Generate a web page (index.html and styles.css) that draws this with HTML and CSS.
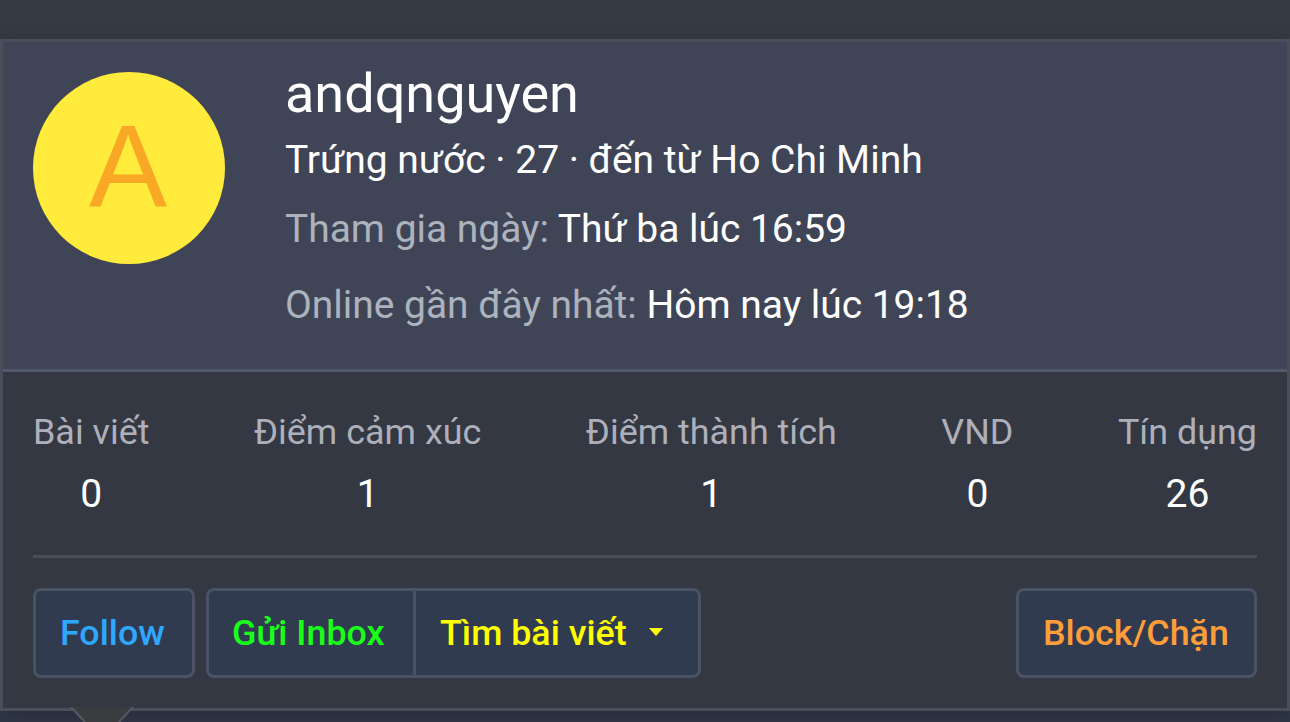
FILE: index.html
```
<!DOCTYPE html>
<html lang="vi">

<head>
    <meta charset="UTF-8">
    <meta name="viewport" content="width=device-width, initial-scale=1.0">
    <link rel="stylesheet" href="styles.css">
    <title>andqnguyen</title>
</head>

<body>
    <div class="tooltip">
        <div class="header">
            <div class="avatar">A</div>
            <div class="info">
                <h4 class="name">andqnguyen</h4>
                <p class="blurb">Trứng nước · 27 · đến từ Ho Chi Minh</p>
                <p class="row"><span class="label">Tham gia ngày:</span> <span>Thứ ba lúc 16:59</span></p>
                <p class="row"><span class="label">Online gần đây nhất:</span> <span>Hôm nay lúc 19:18</span></p>
            </div>
        </div>
        <div class="content">
            <div class="stats">
                <dl>
                    <dt>Bài viết</dt>
                    <dd>0</dd>
                </dl>
                <dl>
                    <dt>Điểm cảm xúc</dt>
                    <dd>1</dd>
                </dl>
                <dl>
                    <dt>Điểm thành tích</dt>
                    <dd>1</dd>
                </dl>
                <dl>
                    <dt>VND</dt>
                    <dd>0</dd>
                </dl>
                <dl>
                    <dt>Tín dụng</dt>
                    <dd>26</dd>
                </dl>
            </div>
            <div class="actions">
                <button class="btn follow">Follow</button>
                <div class="group">
                    <button class="btn inbox">Gửi Inbox</button>
                    <button class="btn find">Tìm bài viết
                        <svg class="caret" width="14" height="8" viewBox="0 0 14 8"><path d="M0 0h14L7 8z" fill="currentColor"/></svg>
                    </button>
                </div>
                <button class="btn block">Block/Chặn</button>
            </div>
        </div>
        <svg class="arrow" width="64" height="15" viewBox="0 0 64 15">
            <path d="M1 0h62L49 15H15z" fill="#3a3c40"/>
            <path d="M1 0l14 15M63 0L49 15" fill="none" stroke="#555962" stroke-width="2"/>
        </svg>
    </div>
</body>

</html>
```
FILE: styles.css
```
* {
    box-sizing: border-box;
}

body {
    margin: 0;
    height: 722px;
    padding-top: 39px;
    overflow: hidden;
    background: linear-gradient(#363a44 0, #363a44 600px, #303747 600px);
    color: #fff;
    font-family: Roboto, sans-serif;
}

h4, p, dl, dd {
    margin: 0;
    font-weight: 400;
}

.tooltip {
    position: relative;
    height: 672px;
    border: 3px solid #4a4e5a;
    background-color: #343842;
    box-shadow: 0 5px 20px rgba(0, 0, 0, 0.2);
}

.header {
    display: flex;
    height: 330px;
    padding: 30px;
    background-color: #3f4556;
    border-bottom: 3px solid #515a6c;
}

.avatar {
    width: 192px;
    height: 192px;
    padding-right: 2px;
    border-radius: 50%;
    background-color: #ffeb3b;
    color: #f9a825;
    font-family: "Liberation Sans", Arial, sans-serif;
    font-size: 117px;
    line-height: 189px;
    text-align: center;
}

.info {
    margin-left: 60px;
    white-space: nowrap;
}

.name {
    font-size: 54px;
    line-height: 44px;
}

.blurb {
    margin: 16px 0 3px;
    font-size: 39px;
    line-height: 56px;
}

.row {
    font-size: 38.95px;
    line-height: 76px;
}

.label {
    color: #adb3bd;
}

.content {
    padding: 30px;
}

.stats {
    display: flex;
    justify-content: space-between;
    height: 156px;
    border-bottom: 3px solid #4b4e58;
    text-align: center;
}

dt {
    color: #adb0ba;
    font-size: 35.9px;
    line-height: 60px;
}

dd {
    font-size: 39px;
    line-height: 65px;
}

.actions {
    display: flex;
    margin-top: 30px;
}

.btn {
    height: 90px;
    padding: 0 0 0 24px;
    border: 3px solid #4a5265;
    border-radius: 8px;
    background-color: #313b4f;
    font-family: inherit;
    font-size: 35.8px;
    font-weight: 500;
    text-align: left;
    white-space: nowrap;
}

.follow {
    width: 162px;
    color: #2ea8ff;
}

.group {
    display: flex;
    margin-left: 11px;
}

.inbox {
    width: 210px;
    padding-left: 23px;
    border-radius: 8px 0 0 8px;
    color: #1aff1a;
}

.find {
    width: 285px;
    border-left: 0;
    border-radius: 0 8px 8px 0;
    color: #ffff00;
}

.caret {
    margin-left: 13px;
    vertical-align: 9px;
}

.block {
    width: 241px;
    margin-left: auto;
    color: #ff9d3b;
}

.arrow {
    position: absolute;
    left: 67px;
    bottom: -14px;
}
```
